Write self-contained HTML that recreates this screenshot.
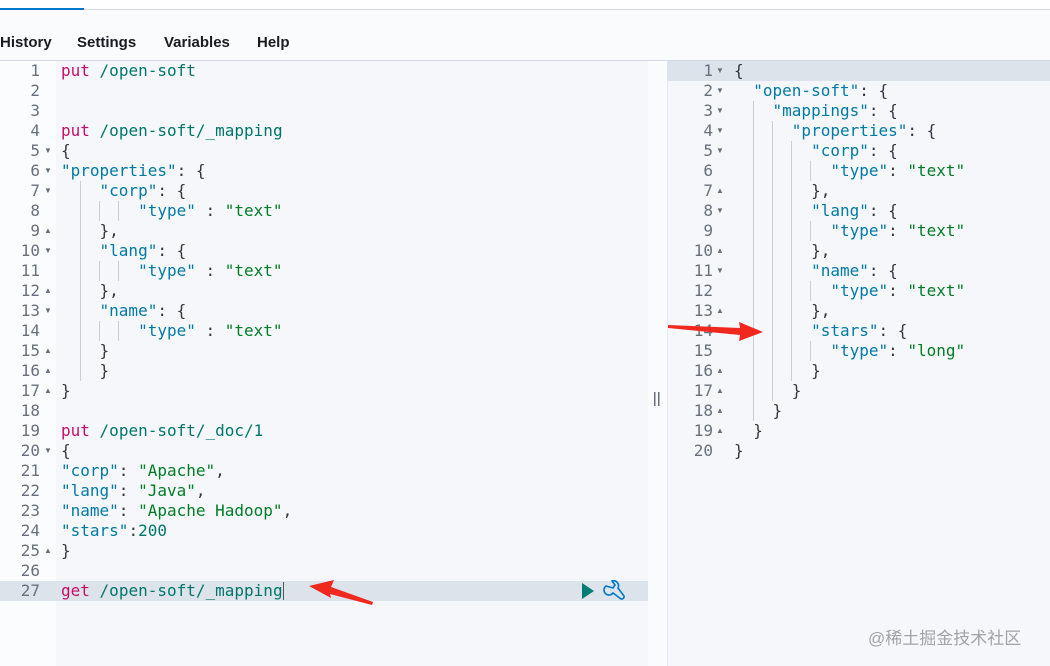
<!DOCTYPE html>
<html><head><meta charset="utf-8"><style>
*{margin:0;padding:0;box-sizing:border-box}
body{width:1050px;height:666px;overflow:hidden;background:#fafbfd;position:relative;font-family:"Liberation Sans",sans-serif}
.top{position:absolute;left:0;top:0;width:1050px;height:10px;background:#fff;border-bottom:1px solid #d3dae6}
.tabline{position:absolute;left:0;top:8px;width:84px;height:2px;background:#0077cc}
.tabs{position:absolute;top:34px;left:0;font-weight:bold;font-size:15px;color:#1a1c21}
.tabs span{position:absolute;white-space:nowrap}
.sep{position:absolute;left:0;top:60px;width:1050px;height:1px;background:#d3dae6}
.lg{position:absolute;left:0;top:61px;width:56px;height:605px;background:#fbfcfd}
.lc{position:absolute;left:56px;top:61px;width:592px;height:605px;background:#f5f7fa}
.rg{position:absolute;left:667px;top:61px;width:61px;height:605px;background:#f5f7fa;border-left:1px solid #e3e7ee}
.rc{position:absolute;left:728px;top:61px;width:322px;height:605px;background:#f5f7fa}
.code{position:absolute;font-family:"DejaVu Sans Mono","Liberation Mono",monospace;font-size:16px;line-height:20px;white-space:pre;color:#343741}
.num{position:absolute;font-family:"DejaVu Sans Mono",monospace;font-size:16px;line-height:20px;color:#69707d;text-align:right;white-space:pre}
.ar{position:absolute;font-size:8px;color:#69707d;line-height:20px}
.m{color:#c80a68}.p{color:#00756c}.k{color:#0079a5}.s{color:#017d26}.n{color:#00756c}
.g{position:absolute;width:1px;background:#c9ced6}
</style></head><body>
<div class="top"></div><div class="tabline"></div>
<div class="tabs"><span style="left:0">History</span><span style="left:77px">Settings</span><span style="left:164px">Variables</span><span style="left:257px">Help</span></div>
<div class="sep"></div>
<div class="lg"></div><div class="lc"></div><div class="rg"></div><div class="rc"></div>
<div style="position:absolute;left:0;top:581px;width:648px;height:20px;background:#dde3ea"></div>
<div style="position:absolute;left:667px;top:61px;width:383px;height:20px;background:#dde3ea"></div>
<div class="num" style="left:0;top:61px;width:40px">1
2
3
4
5
6
7
8
9
10
11
12
13
14
15
16
17
18
19
20
21
22
23
24
25
26
27</div>
<div class="num" style="left:667px;top:61px;width:46px">1
2
3
4
5
6
7
8
9
10
11
12
13
14
15
16
17
18
19
20</div>
<div class="ar" style="left:44px;top:141px">▼</div><div class="ar" style="left:44px;top:161px">▼</div><div class="ar" style="left:44px;top:181px">▼</div>
<div class="ar" style="left:44px;top:221px">▲</div><div class="ar" style="left:44px;top:241px">▼</div><div class="ar" style="left:44px;top:281px">▲</div>
<div class="ar" style="left:44px;top:301px">▼</div><div class="ar" style="left:44px;top:341px">▲</div><div class="ar" style="left:44px;top:361px">▲</div>
<div class="ar" style="left:44px;top:381px">▲</div><div class="ar" style="left:44px;top:441px">▼</div><div class="ar" style="left:44px;top:541px">▲</div>
<div class="ar" style="left:716px;top:61px">▼</div><div class="ar" style="left:716px;top:81px">▼</div><div class="ar" style="left:716px;top:101px">▼</div><div class="ar" style="left:716px;top:121px">▼</div><div class="ar" style="left:716px;top:141px">▼</div>
<div class="ar" style="left:716px;top:181px">▲</div><div class="ar" style="left:716px;top:201px">▼</div><div class="ar" style="left:716px;top:241px">▲</div><div class="ar" style="left:716px;top:261px">▼</div><div class="ar" style="left:716px;top:301px">▲</div>
<div class="ar" style="left:716px;top:361px">▲</div><div class="ar" style="left:716px;top:381px">▲</div><div class="ar" style="left:716px;top:401px">▲</div><div class="ar" style="left:716px;top:421px">▲</div>
<div class="g" style="left:80px;top:181px;height:200px"></div>
<div class="g" style="left:99px;top:201px;height:20px"></div><div class="g" style="left:118px;top:201px;height:20px"></div>
<div class="g" style="left:99px;top:261px;height:20px"></div><div class="g" style="left:118px;top:261px;height:20px"></div>
<div class="g" style="left:99px;top:321px;height:20px"></div><div class="g" style="left:118px;top:321px;height:20px"></div>
<div class="g" style="left:753px;top:101px;height:320px"></div>
<div class="g" style="left:772px;top:121px;height:280px"></div>
<div class="g" style="left:791px;top:141px;height:240px"></div>
<div class="g" style="left:810px;top:161px;height:20px"></div><div class="g" style="left:810px;top:221px;height:20px"></div>
<div class="g" style="left:810px;top:281px;height:20px"></div><div class="g" style="left:810px;top:341px;height:20px"></div>
<div class="code" style="left:61px;top:61px"><span class="m">put</span> <span class="p">/open-soft</span>


<span class="m">put</span> <span class="p">/open-soft/_mapping</span>
{
<span class="k">"properties"</span>: {
    <span class="k">"corp"</span>: {
        <span class="k">"type"</span> : <span class="s">"text"</span>
    },
    <span class="k">"lang"</span>: {
        <span class="k">"type"</span> : <span class="s">"text"</span>
    },
    <span class="k">"name"</span>: {
        <span class="k">"type"</span> : <span class="s">"text"</span>
    }
    }
}

<span class="m">put</span> <span class="p">/open-soft/_doc/1</span>
{
<span class="k">"corp"</span>: <span class="s">"Apache"</span>,
<span class="k">"lang"</span>: <span class="s">"Java"</span>,
<span class="k">"name"</span>: <span class="s">"Apache Hadoop"</span>,
<span class="k">"stars"</span>:<span class="n">200</span>
}

<span class="m">get</span> <span class="p">/open-soft/_mapping</span></div>
<div style="position:absolute;left:283px;top:582px;width:1px;height:18px;background:#555"></div>
<div class="code" style="left:734px;top:61px">{
  <span class="k">"open-soft"</span>: {
    <span class="k">"mappings"</span>: {
      <span class="k">"properties"</span>: {
        <span class="k">"corp"</span>: {
          <span class="k">"type"</span>: <span class="s">"text"</span>
        },
        <span class="k">"lang"</span>: {
          <span class="k">"type"</span>: <span class="s">"text"</span>
        },
        <span class="k">"name"</span>: {
          <span class="k">"type"</span>: <span class="s">"text"</span>
        },
        <span class="k">"stars"</span>: {
          <span class="k">"type"</span>: <span class="s">"long"</span>
        }
      }
    }
  }
}</div>
<svg style="position:absolute;left:0;top:0" width="1050" height="666">
<path d="M582 583 L594 591 L582 599 Z" fill="#017d73"/>
<g fill="none" stroke="#0077cc" stroke-width="1.6">
<path d="M606 586 a5 5 0 1 0 7 7 l8 6 a2.5 2.5 0 0 0 3 -3 l-6 -8 a5 5 0 0 0 -6 -7 l3 4 -2 3 z"/>
</g>
<rect x="654" y="392" width="1.5" height="14" fill="#69707d"/><rect x="658" y="392" width="1.5" height="14" fill="#69707d"/>
<path d="M372 605 L330 594 L331 598 L309 586 L334 580 L331 587 L373 602 Z" fill="#f0281e"/>
<path d="M668 325 L740 328 L739 322 L763 332 L739 341 L740 335 L668 328 Z" fill="#f0281e"/>
</svg>
<div style="position:absolute;left:868px;top:624px;font-size:17px;color:#a0a4aa;font-family:'Liberation Sans','Noto Sans CJK SC',sans-serif">@稀土掘金技术社区</div>
</body></html>
